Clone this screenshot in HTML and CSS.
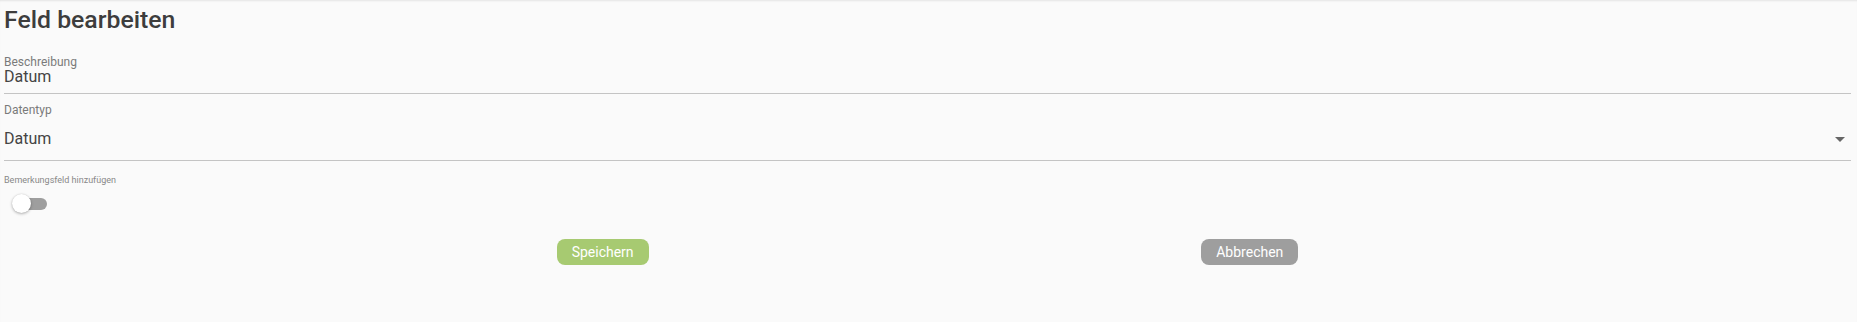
FILE: index.html
```html
<!DOCTYPE html>
<html lang="de">
<head>
<meta charset="utf-8">
<title>Feld bearbeiten</title>
<link rel="stylesheet" href="styles.css">
</head>
<body>
<div class="page">
  <h1 class="title">Feld bearbeiten</h1>

  <div class="field">
    <div class="field-label">Beschreibung</div>
    <div class="field-value">Datum</div>
  </div>

  <div class="field field-select">
    <div class="field-label">Datentyp</div>
    <div class="select-row">
      <span class="field-value">Datum</span>
      <span class="select-arrow"></span>
    </div>
  </div>

  <div class="toggle-label">Bemerkungsfeld hinzufügen</div>
  <div class="toggle">
    <span class="toggle-track"></span>
    <span class="toggle-thumb"></span>
  </div>

  <div class="actions">
    <button class="btn btn-save">Speichern</button>
    <button class="btn btn-cancel">Abbrechen</button>
  </div>
</div>
</body>
</html>
```

FILE: styles.css
```css
html, body {
  margin: 0;
  padding: 0;
  height: 100%;
}

body {
  background: #fafafa;
  font-family: Roboto, "Liberation Sans", sans-serif;
  color: #444444;
}

.page {
  min-height: 100%;
  box-sizing: border-box;
  padding: 0 6px 0 4px;
  box-shadow: inset 0 2px 2px -1px rgba(0, 0, 0, 0.09);
  overflow: hidden;
}

.title {
  margin: 5px 0 0 0;
  font-size: 24.8px;
  line-height: 30px;
  font-weight: 500;
  color: #3d3d3d;
}

.field {
  margin-top: 21px;
  border-bottom: 1px solid #c4c4c4;
  padding-bottom: 7px;
}

.field-label {
  font-size: 12px;
  line-height: 12px;
  color: #7a7a7a;
}

.field-value {
  font-size: 16px;
  line-height: 18px;
  color: #444444;
}

.field-select {
  margin-top: 10px;
  padding-bottom: 12px;
}

.select-row {
  margin-top: 14px;
  display: flex;
  align-items: center;
  justify-content: space-between;
}

.select-arrow {
  width: 0;
  height: 0;
  margin-right: 6px;
  border-left: 5px solid transparent;
  border-right: 5px solid transparent;
  border-top: 5px solid #666666;
}

.toggle-label {
  margin-top: 14px;
  font-size: 9px;
  line-height: 10px;
  color: #888888;
}

.toggle {
  position: relative;
  margin: 9px 0 0 8px;
  width: 35px;
  height: 20px;
}

.toggle-track {
  position: absolute;
  left: 1px;
  top: 4px;
  width: 34px;
  height: 12px;
  border-radius: 6px;
  background: #9e9e9e;
}

.toggle-thumb {
  position: absolute;
  left: 0;
  top: 0;
  width: 19px;
  height: 19px;
  border-radius: 50%;
  background: #ffffff;
  box-shadow: 0 1px 3px rgba(0, 0, 0, 0.3), 0 0 1px rgba(0, 0, 0, 0.15);
}

.actions {
  margin-top: 25px;
  display: flex;
  justify-content: space-evenly;
}

.btn {
  font-family: Roboto, "Liberation Sans", sans-serif;
  font-size: 14px;
  line-height: 26px;
  height: 26px;
  padding: 0 15px;
  border: none;
  border-radius: 8px;
  color: #ffffff;
  cursor: pointer;
}

.btn-save {
  background: #a7ca71;
}

.btn-cancel {
  background: #9e9e9e;
}
```
